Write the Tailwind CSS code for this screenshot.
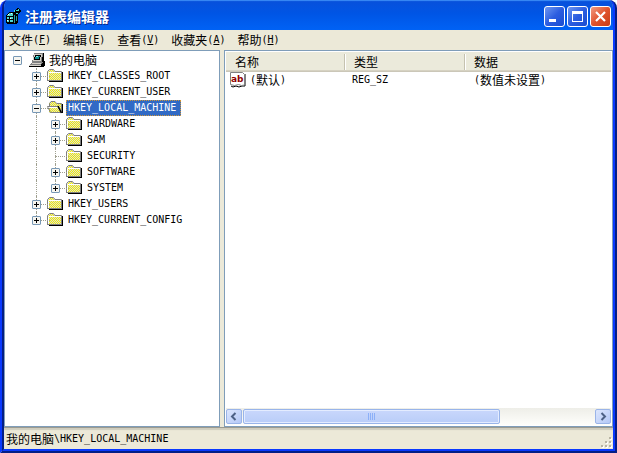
<!DOCTYPE html>
<html lang="zh-CN">
<head>
    <meta charset="UTF-8">
    <meta name="viewport" content="width=device-width, initial-scale=1.0">
    <title>注册表编辑器</title>
    <!-- Tailwind CSS -->
    <script src="https://cdn.jsdelivr.net/npm/@tailwindcss/browser@4"></script>
</head>
<body class="bg-white text-black font-['Noto_Sans_CJK_SC',sans-serif] text-[12px] leading-4">

    <!-- Shared icons -->
    <svg class="absolute size-0" aria-hidden="true">
        <defs>
            <pattern id="dither" width="2" height="2" patternUnits="userSpaceOnUse">
                <path d="M0 0h2v2H0z" fill="#f4f000"/><path d="M0 0h1v1H0zM1 1h1v1H1z" fill="#dcdcd8"/>
            </pattern>
            <symbol id="plus" viewBox="0 0 9 9">
                <rect x=".5" y=".5" width="8" height="8" rx=".5" fill="#f6f5f0" stroke="#7898b5"/>
                <path d="M2 4h5v1H2zM4 2h1v5H4z"/>
            </symbol>
            <symbol id="minus" viewBox="0 0 9 9">
                <rect x=".5" y=".5" width="8" height="8" rx=".5" fill="#f6f5f0" stroke="#7898b5"/>
                <path d="M2 4h5v1H2z"/>
            </symbol>
            <symbol id="folder" viewBox="0 0 16 16">
                <path d="M2 13h13V4h1v10H2z"/>
                <path d="M1 13V4l1-2h5l1 2h6v9z" fill="url(#dither)" shape-rendering="crispEdges"/>
                <path d="M.5 13V3.500L2.500 1.500h4L8 3.500h6.500V13" fill="none" stroke="#808080"/>
                <path d="M0 12.500h15" stroke="#808080"/>
                <path d="M1.500 12V4.500H14" fill="none" stroke="#fff"/>
            </symbol>
            <symbol id="folder-open" viewBox="0 0 16 16">
                <path d="M4 13h12V4h-1v9H4z"/>
                <path d="M2 13V4l1-2h5l1 2h5v9z" fill="url(#dither)" shape-rendering="crispEdges"/>
                <path d="M2.500 7V3.500L4 1.500h4l1.500 2h5V12" fill="none" stroke="#808080"/>
                <path d="M.5 6.500h10l4 6H3.500z" fill="url(#dither)" stroke="#808080"/>
                <path d="M1.500 7.500h9" stroke="#fff"/>
                <path d="M11 6l3.500 7" stroke="#000" stroke-width="1.500"/>
            </symbol>
        </defs>
    </svg>

    <div class="flex h-screen flex-col overflow-hidden rounded-t-lg border-x-4 border-b-4 border-[#0831d9] bg-[#ece9d8] [border-style:ridge]">

        <!-- Title bar -->
        <header class="-mx-1 -mt-[3px] flex h-[33px] shrink-0 items-center bg-linear-to-b from-[#0a4fd8] via-[#0055e5] to-[#0062f5] pr-[6px] pl-[5px] pt-[5px] shadow-[inset_0_4px_1px_#3c8cf5]">
            <svg class="size-4" viewBox="0 0 16 16" shape-rendering="crispEdges">
                <path d="M1 7l3-3h5l4 3v7l-2 2H2l-1-1z" fill="#000"/>
                <path d="M2 7l2-2h4v3H2zM2 9h2v2H2zM5 9h3v2H5zM2 12h2v2H2zM5 12h3v2H5z" fill="#50d8d0"/>
                <path d="M9 7h1v8H9zM11 8h1v5h-1z" fill="#20a0a0"/>
                <path d="M9 3l4-3 3 3-3 4-4-1z" fill="#000"/>
                <path d="M11 2h2v1h-2zM13 1h1v2h-1zM11 5h2v1h-2zM9 2h1v2H9z" fill="#40e0d8"/>
                <path d="M3 6h1v1H3zM6 5h1v1H6zM5 10h1v1H5zM2 12h1v1H2z" fill="#fff"/>
            </svg>
            <h1 class="ml-1 flex-1 text-[14px] font-bold leading-5 text-white [text-shadow:1px_1px_#0a2a8c]">注册表编辑器</h1>
            <div class="flex gap-[2px]">
                <button type="button" aria-label="最小化" class="size-[21px] rounded-[3px] border border-white bg-linear-to-br from-[#6f96f0] via-[#2c5de0] to-[#1a4cd0]">
                    <svg viewBox="0 0 19 19"><path d="M4 12h7v3H4z" fill="#fff"/></svg>
                </button>
                <button type="button" aria-label="最大化" class="size-[21px] rounded-[3px] border border-white bg-linear-to-br from-[#6f96f0] via-[#2c5de0] to-[#1a4cd0]">
                    <svg viewBox="0 0 19 19"><path d="M4 4h11v11H4zM5 7v7h9V7z" fill="#fff" fill-rule="evenodd"/></svg>
                </button>
                <button type="button" aria-label="关闭" class="size-[21px] rounded-[3px] border border-white bg-linear-to-br from-[#f09a80] via-[#e0532c] to-[#c83c14]">
                    <svg viewBox="0 0 19 19"><path d="M5 5l9 9M14 5l-9 9" stroke="#fff" stroke-width="2.200"/></svg>
                </button>
            </div>
        </header>

        <!-- Menu bar -->
        <nav class="flex h-5 shrink-0 items-center gap-3 px-[5px]">
            <button type="button" class="flex items-center">文件<span class="font-['DejaVu_Sans_Mono',monospace] text-[10px]">(<u>F</u>)</span></button>
            <button type="button" class="flex items-center">编辑<span class="font-['DejaVu_Sans_Mono',monospace] text-[10px]">(<u>E</u>)</span></button>
            <button type="button" class="flex items-center">查看<span class="font-['DejaVu_Sans_Mono',monospace] text-[10px]">(<u>V</u>)</span></button>
            <button type="button" class="flex items-center">收藏夹<span class="font-['DejaVu_Sans_Mono',monospace] text-[10px]">(<u>A</u>)</span></button>
            <button type="button" class="flex items-center">帮助<span class="font-['DejaVu_Sans_Mono',monospace] text-[10px]">(<u>H</u>)</span></button>
        </nav>

        <main class="flex min-h-0 flex-1 gap-1">
            <!-- Key tree -->
            <section class="w-[216px] shrink-0 border border-[#7f9db9] bg-white pt-px">
                <div class="flex h-4 items-center pl-2">
                    <button type="button" aria-label="折叠"><svg class="size-[9px]"><use href="#minus"/></svg></button>
                    <svg class="ml-[7px] size-4" viewBox="0 0 16 16" shape-rendering="crispEdges">
                        <path d="M5 1h9l1 1v8l-1 1H4z" fill="#000"/>
                        <path d="M5 1h9l-1 9H3z" fill="#808080"/>
                        <path d="M5 2h8l-1 7H4z" fill="#d4d0c8"/>
                        <path d="M6 3h6l-1 5H5z" fill="#000"/>
                        <path d="M7 4h4l-1 3H6z" fill="#109090"/>
                        <path d="M7 4h2v1H7z" fill="#80f0e8"/>
                        <path d="M3 10h11l2-1v4l-2 2H0v-2z" fill="#000"/>
                        <path d="M3 10h11l-2 3H0z" fill="#808080"/>
                        <path d="M3 11h9l-1 1H2z" fill="#d4d0c8"/>
                        <path d="M0 13h12v1H0z" fill="#d4d0c8"/>
                    </svg>
                    <span class="ml-1">我的电脑</span>
                </div>
                <ul id="tree" class="font-['DejaVu_Sans_Mono',monospace] text-[10px]"></ul>
            </section>

            <!-- Value list -->
            <section class="flex min-w-0 flex-1 flex-col border border-[#7f9db9] bg-white p-px">
                <table class="w-full table-fixed border-collapse text-left">
                    <thead class="h-5 bg-[#ebeadb] shadow-[inset_0_-1px_#cbc7b8,inset_0_-2px_#d6d2c2]">
                        <tr>
                            <th class="w-[119px] p-0 font-normal"><div class="my-[2px] border-r border-[#c5c2b0] pl-[9px]">名称</div></th>
                            <th class="w-[120px] p-0 font-normal"><div class="my-[2px] border-r border-[#c5c2b0] border-l border-l-white pl-2">类型</div></th>
                            <th class="p-0 font-normal"><div class="my-[2px] border-l border-white pl-2">数据</div></th>
                        </tr>
                    </thead>
                    <tbody>
                        <tr class="h-4">
                            <td class="p-0">
                                <div class="flex items-center gap-1 pl-1">
                                    <svg class="size-4" viewBox="0 0 16 16">
                                        <path d="M1 14l2 1 3-1 3 1 3-1h3V2" fill="none" stroke="#000"/>
                                        <path d="M.5.500h12l2 2V13l-3 .500-3-1-4 1-4-1z" fill="#fff" stroke="#808080"/>
                                        <text x="1" y="10" font-family="DejaVu Sans" font-size="9" font-weight="bold" fill="#900000">ab</text>
                                    </svg>
                                    <span class="flex items-center"><span class="font-['DejaVu_Sans_Mono',monospace] text-[10px]">(</span>默认<span class="font-['DejaVu_Sans_Mono',monospace] text-[10px]">)</span></span>
                                </div>
                            </td>
                            <td class="p-0 pl-[7px] font-['DejaVu_Sans_Mono',monospace] text-[10px]">REG_SZ</td>
                            <td class="p-0 pl-[9px]"><div class="flex items-center"><span class="font-['DejaVu_Sans_Mono',monospace] text-[10px]">(</span>数值未设置<span class="font-['DejaVu_Sans_Mono',monospace] text-[10px]">)</span></div></td>
                        </tr>
                    </tbody>
                </table>

                <!-- Horizontal scrollbar -->
                <div class="mt-auto flex h-[17px] items-center bg-linear-to-b from-[#eeeee8] to-[#fefefb]">
                    <button type="button" aria-label="向左滚动" class="h-[15px] w-4 rounded-[2px] border border-[#9ab4e8] bg-linear-to-br from-[#dce6fd] to-[#b4c8f6]">
                        <svg viewBox="0 0 14 13"><path d="M8.500 3L5 6.500 8.500 10" fill="none" stroke="#4d6185" stroke-width="2"/></svg>
                    </button>
                    <div class="flex flex-1 pl-px">
                        <div class="flex h-[15px] w-[73%] items-center justify-center gap-px rounded-[2px] border border-[#98b4ea] bg-linear-to-b from-[#c9d7fc] to-[#b9cdf8] shadow-[inset_0_0_0_1px_#e4ecff]">
                            <i class="h-[7px] w-px bg-[#8cb0f8]"></i><i class="h-[7px] w-px bg-[#8cb0f8]"></i><i class="h-[7px] w-px bg-[#8cb0f8]"></i><i class="h-[7px] w-px bg-[#8cb0f8]"></i>
                        </div>
                    </div>
                    <button type="button" aria-label="向右滚动" class="h-[15px] w-4 rounded-[2px] border border-[#9ab4e8] bg-linear-to-br from-[#dce6fd] to-[#b4c8f6]">
                        <svg viewBox="0 0 14 13"><path d="M5.500 3L9 6.500 5.500 10" fill="none" stroke="#4d6185" stroke-width="2"/></svg>
                    </button>
                </div>
            </section>
        </main>

        <!-- Status bar -->
        <footer class="flex h-[22px] shrink-0 items-center border-t border-[#9a9a90] pl-[2px] shadow-[inset_0_2px_1px_#cfccbd]">
            <span>我的电脑</span><span class="font-['DejaVu_Sans_Mono',monospace] text-[10px]">\HKEY_LOCAL_MACHINE</span>
            <svg class="ml-auto size-3 self-end" viewBox="0 0 12 12">
                <path d="M9 1h2v2H9zM5 5h2v2H5zM9 5h2v2H9zM1 9h2v2H1zM5 9h2v2H5zM9 9h2v2H9z" fill="#fff"/>
                <path d="M8 0h2v2H8zM4 4h2v2H4zM8 4h2v2H8zM0 8h2v2H0zM4 8h2v2H4zM8 8h2v2H8z" fill="#b8b4a3"/>
            </svg>
        </footer>
    </div>

    <script>
        // Registry keys: name, depth, toggle icon
        const keys = [
            ['HKEY_CLASSES_ROOT', 1, 'plus'],
            ['HKEY_CURRENT_USER', 1, 'plus'],
            ['HKEY_LOCAL_MACHINE', 1, 'minus'],
            ['HARDWARE', 2, 'plus'],
            ['SAM', 2, 'plus'],
            ['SECURITY', 2, ''],
            ['SOFTWARE', 2, 'plus'],
            ['SYSTEM', 2, 'plus'],
            ['HKEY_USERS', 1, 'plus'],
            ['HKEY_CURRENT_CONFIG', 1, 'plus'],
        ];

        // One 19px cell per level, with the dotted lines behind the toggle
        function cell(toggle, half, branch) {
            return `<span class="relative flex h-4 w-[19px] shrink-0 items-center">
                <i class="absolute left-1 top-0 border-l border-dotted border-[#a0a090] ${half ? 'h-2' : 'h-4'}"></i>
                ${branch ? '<i class="absolute left-1 top-2 w-[14px] border-t border-dotted border-[#a0a090]"></i>' : ''}
                ${toggle ? `<button type="button" aria-label="展开或折叠" class="relative"><svg class="size-[9px]"><use href="#${toggle}"/></svg></button>` : ''}
            </span>`;
        }

        document.getElementById('tree').innerHTML = keys.map(([name, depth, toggle]) => {
            const open = toggle === 'minus';
            const last = name === 'SYSTEM' || name === 'HKEY_CURRENT_CONFIG';
            return `<li class="flex h-4 items-center pl-[27px]">
                ${depth === 2 ? cell('', false, false) : ''}${cell(toggle, last, true)}
                <svg class="-ml-1 size-4 shrink-0"><use href="#${open ? 'folder-open' : 'folder'}"/></svg>
                <span class="ml-[3px] px-[2px] ${open ? 'bg-[#316ac5] text-white pr-[5px] outline-1 -outline-offset-1 outline-dotted outline-[#ce953a]' : ''}">${name}</span>
            </li>`;
        }).join('');
    </script>
</body>
</html>
